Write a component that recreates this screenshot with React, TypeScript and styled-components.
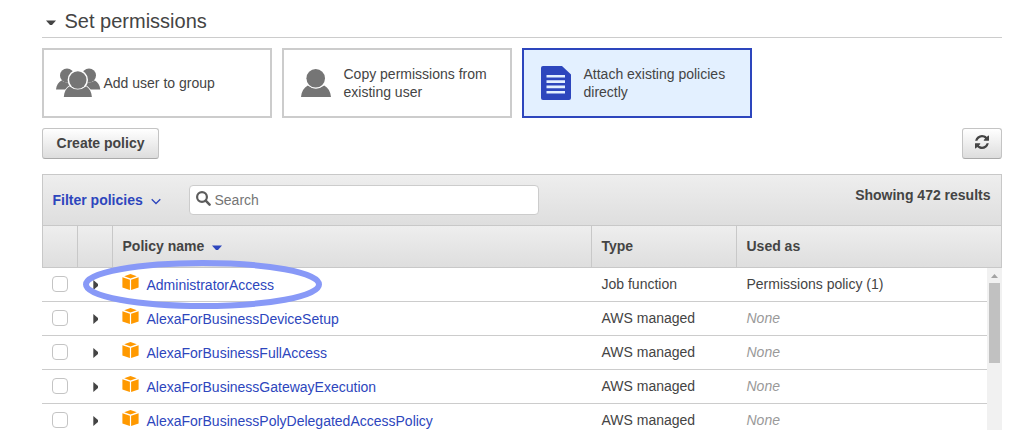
import React from 'react';
import styled, { createGlobalStyle } from 'styled-components';

const GlobalStyle = createGlobalStyle`
  *, *::before, *::after { box-sizing: border-box; }
  body {
    margin: 0;
    background: #fff;
    overflow: hidden;
    color: #444;
    font: 14px/18px "Liberation Sans", Arial, sans-serif;
  }
`;

const Page = styled.main`
  width: 1002px;
  height: 430px;
  padding-left: 42px;
  overflow: hidden;
  display: flex;
  flex-direction: column;
`;

const SectionTitle = styled.header`
  height: 38px;
  flex: none;
  display: flex;
  align-items: center;
  gap: 8.5px;
  padding: 4px 0 0 4px;
  border-bottom: 1px solid #ccc;
`;

const TitleText = styled.h1`
  margin: 0;
  font-size: 20px;
  font-weight: 400;
  line-height: 24px;
`;

const TitleCaret = styled.svg`
  width: 10px;
  height: 6px;
  margin-top: 5px;
`;

const Options = styled.div`
  display: flex;
  flex: none;
  gap: 10px;
  margin-top: 10px;
`;

const OptionCard = styled.button<{ $selected?: boolean }>`
  width: 230px;
  height: 70px;
  display: flex;
  align-items: center;
  padding: 0 20px 0 12px;
  border: 2px solid ${(p) => (p.$selected ? '#2d46bd' : '#ccc')};
  background: ${(p) => (p.$selected ? '#e3f0ff' : '#fff')};
  color: #444;
  font: inherit;
  text-align: left;
`;

const OptionIcon = styled.span<{ $indent?: boolean }>`
  width: 47.5px;
  flex: none;
  display: flex;
  padding-left: ${(p) => (p.$indent ? 5 : 0)}px;
  svg { display: block; flex: none; }
`;

const Actions = styled.div`
  display: flex;
  flex: none;
  justify-content: space-between;
  margin-top: 10px;
`;

const Button = styled.button<{ $width: number }>`
  width: ${(p) => p.$width}px;
  height: 31px;
  display: flex;
  align-items: center;
  justify-content: center;
  padding: 0 0 2px;
  border: 1px solid #c4c4c4;
  border-bottom-color: #aaa;
  border-radius: 3px;
  background: linear-gradient(#fff, #ddd);
  color: #444;
  font: bold 14px/18px "Liberation Sans", Arial, sans-serif;
  svg { margin-top: -1px; }
`;

const Panel = styled.section`
  margin-top: 15px;
  flex: none;
`;

const FilterBar = styled.div`
  height: 51px;
  display: flex;
  align-items: center;
  padding: 0 10.5px 0 9.5px;
  border: 1px solid #c8c8c8;
  border-bottom: 0;
  background: linear-gradient(#eee, #dedede);
`;

const FilterLink = styled.span`
  width: 136.5px;
  display: flex;
  align-items: center;
  gap: 8px;
  color: #2d46bd;
  font-weight: 700;
  svg { margin-top: 3px; }
`;

const SearchBox = styled.label`
  width: 350px;
  height: 30px;
  display: flex;
  align-items: center;
  gap: 3.5px;
  padding-left: 6px;
  border: 1px solid #ccc;
  border-radius: 4px;
  background: #fff;
  color: #757575;
  svg { margin-top: -3px; }
`;

const ResultCount = styled.strong`
  margin: -10px 0 0 auto;
`;

const columns = '35px 35px 479px 145px 1fr';

const TableHead = styled.div`
  height: 43px;
  display: grid;
  grid-template-columns: ${columns};
  border: 1px solid #c8c8c8;
  background: linear-gradient(#eee, #dedede);
`;

const HeadCell = styled.div`
  display: flex;
  align-items: center;
  gap: 8px;
  padding: 0 0 1px 9.5px;
  border-right: 1px solid #c8c8c8;
  font-weight: 700;
  &:last-child { border-right: 0; }
  svg { margin-top: 3px; }
`;

const TableBody = styled.div`
  display: flex;
  height: 162px;
  overflow: hidden;
`;

const Rows = styled.div`
  width: 945px;
`;

const Row = styled.div`
  height: 34px;
  display: grid;
  grid-template-columns: ${columns};
  padding-left: 1px;
  border-bottom: 1px solid #ccc;
`;

const Cell = styled.div<{ $muted?: boolean }>`
  display: flex;
  align-items: center;
  padding: 0 0 1px 9.5px;
  color: ${(p) => (p.$muted ? '#999' : '#444')};
  font-style: ${(p) => (p.$muted ? 'italic' : 'normal')};
`;

const CheckCell = styled(Cell)`
  padding-left: 9px;
`;

const ExpandCell = styled(Cell)`
  padding: 1px 0 0 15px;
`;

const NameCell = styled(Cell)`
  gap: 8px;
  padding: 1px 0 0 8.5px;
  color: #2d46bd;
  svg { margin-top: -6px; }
`;

const Checkbox = styled.input`
  appearance: none;
  width: 16px;
  height: 16px;
  margin: 0;
  border: 1px solid #c4c4c4;
  border-radius: 4px;
  background: #fff;
`;

const Scrollbar = styled.div`
  width: 15px;
  display: flex;
  flex-direction: column;
  align-items: center;
  padding-top: 6px;
  background: #f1f1f1;
`;

const Thumb = styled.div`
  width: 11px;
  height: 80px;
  margin-top: 5px;
  background: #c1c1c1;
`;

const Highlight = styled.svg`
  position: absolute;
  left: 83px;
  top: 260px;
  pointer-events: none;
`;

const GroupIcon = () => (
  <svg width="45" height="30" viewBox="0 0 45 30" fill="#757575">
    <circle cx="11" cy="7.500" r="7" />
    <circle cx="33" cy="7.500" r="7" />
    <path d="M0 21.500c.4-4.500 2.500-7.300 5.500-9q5.700 4 11.500 0l4 9zM44.300 21.500c-.4-4.500-2.500-7.300-5.500-9q-5.700 4-11.500 0l-4 9z" />
    <path d="M6.800 30c.5-6 2.500-10 6.500-12.500h17c4 2.500 6.500 6.500 7 12.500z" fill="#fff" />
    <circle cx="21.800" cy="12" r="10.200" fill="#fff" />
    <circle cx="21.800" cy="12" r="8.700" />
    <path d="M7.800 29c.4-5.200 2.200-8.600 5.500-10.800q8.500 6.800 17 0c3.300 2.200 5.200 5.600 5.600 10.800z" />
  </svg>
);

const UserIcon = () => (
  <svg width="30" height="30" viewBox="0 0 30 30" fill="#757575">
    <path d="M0 29c.5-5.500 2.800-9.300 6.800-11.600q8.200 6.200 16.400 0c4 2.300 6.300 6.100 6.800 11.600z" />
    <circle cx="14.700" cy="10.300" r="10.300" fill="#fff" />
    <circle cx="14.700" cy="10.300" r="9.300" />
  </svg>
);

const DocumentIcon = () => (
  <svg width="30" height="34" viewBox="0 0 30 34">
    <path d="M2 0h19l9 8.500V32a2 2 0 0 1-2 2H2a2 2 0 0 1-2-2V2a2 2 0 0 1 2-2z" fill="#2d46bd" />
    <path d="M5.500 10.300H24M5.500 15.600H24M5.500 20.900H24M5.500 26.200H24" stroke="#e3f0ff" strokeWidth="2.600" />
  </svg>
);

const RefreshIcon = () => (
  <svg width="14" height="14" viewBox="0 0 1536 1536" fill="#444">
    <path d="M1511 928q0 5-1 7-64 268-268 434.500t-478 166.500q-146 0-282.500-55t-243.500-157l-129 129q-19 19-45 19t-45-19-19-45v-448q0-26 19-45t45-19h448q26 0 45 19t19 45-19 45l-137 137q71 66 161 102t187 36q134 0 250-65t186-179q11-17 53-117 8-23 30-23h192q13 0 22.500 9.500t9.500 22.500zm25-800v448q0 26-19 45t-45 19h-448q-26 0-45-19t-19-45 19-45l138-138q-148-137-349-137-134 0-250 65t-186 179q-11 17-53 117-8 23-30 23h-199q-13 0-22.500-9.500t-9.500-22.500v-7q65-268 270-434.500t480-166.500q146 0 284 55.500t245 156.500l130-129q19-19 45-19t45 19 19 45z" />
  </svg>
);

const SearchIcon = () => (
  <svg width="15" height="15" viewBox="0 0 15 15" fill="none" stroke="#5c5c5c">
    <circle cx="6" cy="6" r="4.900" strokeWidth="2.200" />
    <path d="M9.700 9.700l3.900 3.900" strokeWidth="2.500" strokeLinecap="round" />
  </svg>
);

const CubeIcon = () => (
  <svg width="17" height="17" viewBox="0 0 17 17" fill="#ff9900">
    <path d="M8.500 0l6.300 2.200-6.300 2.300-6.300-2.300zM.4 3.300l7.500 2.500V16L.4 13.600zM16.600 3.300L9.100 5.800V16l7.500-2.400z" />
  </svg>
);

const policies = [
  { name: 'AdministratorAccess', type: 'Job function', used: 'Permissions policy (1)' },
  { name: 'AlexaForBusinessDeviceSetup', type: 'AWS managed' },
  { name: 'AlexaForBusinessFullAccess', type: 'AWS managed' },
  { name: 'AlexaForBusinessGatewayExecution', type: 'AWS managed' },
  { name: 'AlexaForBusinessPolyDelegatedAccessPolicy', type: 'AWS managed' },
];

export default function App() {
  return (
    <>
      <GlobalStyle />
      <Page>
        <SectionTitle>
          <TitleCaret viewBox="0 0 10 6"><path d="M0 .5h10L6 5H4z" fill="#444" /></TitleCaret>
          <TitleText>Set permissions</TitleText>
        </SectionTitle>
        <Options>
          <OptionCard>
            <OptionIcon><GroupIcon /></OptionIcon>
            <span>Add user to group</span>
          </OptionCard>
          <OptionCard>
            <OptionIcon $indent><UserIcon /></OptionIcon>
            <span>Copy permissions from existing user</span>
          </OptionCard>
          <OptionCard $selected>
            <OptionIcon $indent><DocumentIcon /></OptionIcon>
            <span>Attach existing policies directly</span>
          </OptionCard>
        </Options>
        <Actions>
          <Button $width={117}>Create policy</Button>
          <Button $width={40} aria-label="Refresh"><RefreshIcon /></Button>
        </Actions>
        <Panel>
          <FilterBar>
            <FilterLink>
              Filter policies
              <svg width="10" height="7" viewBox="0 0 10 7" fill="none" stroke="#2d46bd" strokeWidth="1.300">
                <path d="M.7 1.200L5 5.500l4.300-4.300" />
              </svg>
            </FilterLink>
            <SearchBox><SearchIcon />Search</SearchBox>
            <ResultCount>Showing 472 results</ResultCount>
          </FilterBar>
          <TableHead>
            <HeadCell />
            <HeadCell />
            <HeadCell>
              Policy name
              <svg width="10" height="6" viewBox="0 0 10 6"><path d="M0 .5h10L6 5H4z" fill="#2d46bd" /></svg>
            </HeadCell>
            <HeadCell>Type</HeadCell>
            <HeadCell>Used as</HeadCell>
          </TableHead>
          <TableBody>
            <Rows>
              {policies.map((p) => (
                <Row key={p.name}>
                  <CheckCell><Checkbox type="checkbox" aria-label={p.name} /></CheckCell>
                  <ExpandCell>
                    <svg width="6" height="10" viewBox="0 0 6 10"><path d="M.3 0L5 4v2L.3 10z" fill="#444" /></svg>
                  </ExpandCell>
                  <NameCell><CubeIcon />{p.name}</NameCell>
                  <Cell>{p.type}</Cell>
                  <Cell $muted={!p.used}>{p.used ?? 'None'}</Cell>
                </Row>
              ))}
            </Rows>
            <Scrollbar>
              <svg width="7" height="4" viewBox="0 0 7 4"><path d="M0 4l3.500-4L7 4z" fill="#a3a3a3" /></svg>
              <Thumb />
            </Scrollbar>
          </TableBody>
        </Panel>
        <Highlight width="239" height="49" viewBox="0 0 239 49">
          <ellipse cx="119.500" cy="24.500" rx="116.500" ry="21.500" fill="none" stroke="#8899f7" strokeWidth="6" />
        </Highlight>
      </Page>
    </>
  );
}
